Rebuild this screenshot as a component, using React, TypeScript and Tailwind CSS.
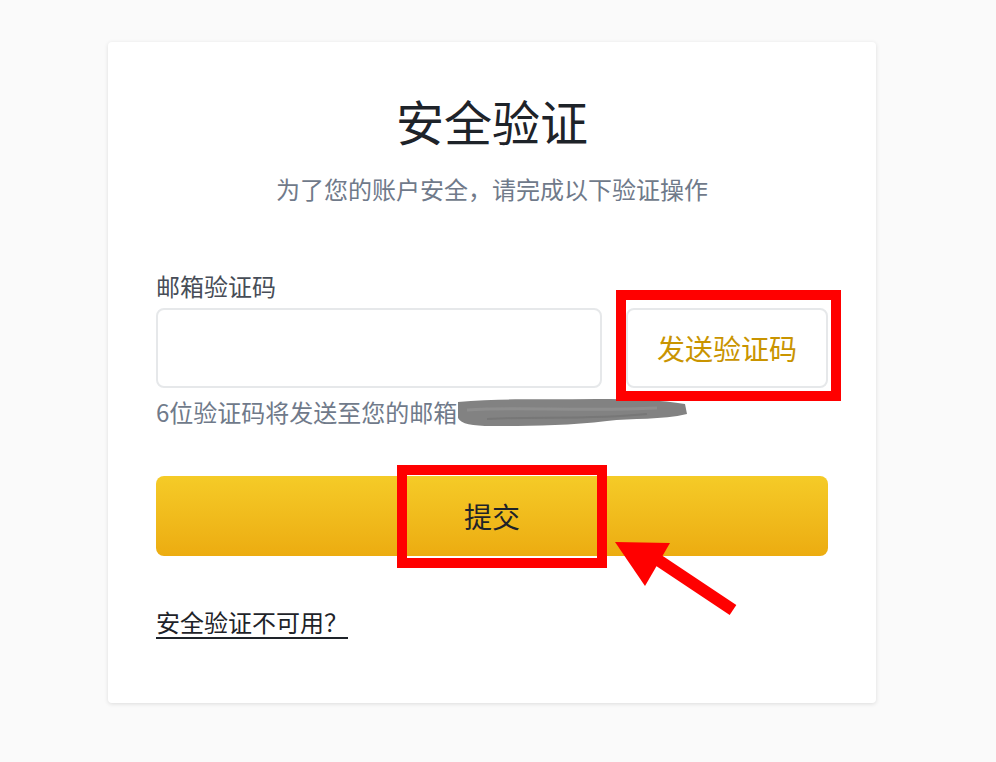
import React from "react";

const font = "font-['PingFang_SC','Noto_Sans_CJK_SC','Noto_Sans',sans-serif]";

// red annotation: stroke box around something
function Mark({ className }: { className: string }) {
  return (
    <div
      className={`pointer-events-none absolute border-[10px] border-[#ff0000] ${className}`}
    />
  );
}

function Arrow() {
  return (
    <svg
      className="pointer-events-none absolute left-[600px] top-[530px]"
      width="150"
      height="90"
      viewBox="0 0 150 90"
    >
      <polygon points="15,12 70,13 45,56" fill="#ff0000" />
      <line
        x1="55"
        y1="28"
        x2="133"
        y2="80"
        stroke="#ff0000"
        strokeWidth="12"
      />
    </svg>
  );
}

// the blurred-out email address
function Scribble() {
  return (
    <svg width="232" height="32" viewBox="0 0 232 32" className="blur-[0.7px]">
      <path
        d="M1 6 C40 2 90 4 140 3 C175 3 205 4 228 8 L230 18 C205 24 175 22 150 25 C110 30 70 30 35 30 C15 30 4 28 1 22 Z"
        fill="#828282"
      />
      <path d="M10 14 C60 10 120 16 200 12" stroke="#8e8e8e" strokeWidth="3" fill="none" />
      <path d="M30 23 C80 20 130 24 190 18" stroke="#777" strokeWidth="2" fill="none" />
    </svg>
  );
}

export default function App() {
  return (
    <div className={`relative min-h-[762px] bg-[#fafafa] pt-[42px] ${font}`}>
      <div className="ml-[108px] w-[768px] rounded-[4px] bg-white px-12 pt-[50px] pb-[65px] shadow-[0_1px_4px_rgba(0,0,0,0.12)]">
        <h1 className="text-center text-[48px] leading-[56px] font-normal text-[#1e2329]">
          安全验证
        </h1>
        <p className="mt-[25px] text-center text-[24px] leading-[32px] text-[#707a8a]">
          为了您的账户安全，请完成以下验证操作
        </p>

        <label className="mt-[65px] block text-[24px] leading-[32px] text-[#474d57]">
          邮箱验证码
        </label>
        <div className="mt-[6px] flex gap-6">
          <input
            type="text"
            className="h-[80px] flex-1 rounded-[8px] border-2 border-[#e6e8ea] bg-white px-4 text-[24px] outline-none"
          />
          <button className="h-[80px] w-[202px] rounded-[8px] border-2 border-[#e6e8ea] bg-white text-[28px] text-[#c99400]">
            发送验证码
          </button>
        </div>
        <div className="mt-[8px] flex items-center text-[24px] leading-[32px] text-[#707a8a]">
          <span>6位验证码将发送至您的邮箱</span>
          <Scribble />
        </div>

        <button className="mt-[48px] flex h-[80px] w-full items-center justify-center rounded-[8px] bg-gradient-to-b from-[#f5cb27] to-[#ecac10] text-[28px] text-[#1e2329]">
          提交
        </button>

        <a
          href="#"
          className="mt-[50px] inline-block text-[24px] leading-[32px] text-[#1e2329] underline decoration-[2px] underline-offset-[5px]"
        >
          安全验证不可用？
        </a>
      </div>

      <Mark className="left-[616px] top-[290px] h-[111px] w-[225px]" />
      <Mark className="left-[397px] top-[465px] h-[103px] w-[210px]" />
      <Arrow />
    </div>
  );
}
